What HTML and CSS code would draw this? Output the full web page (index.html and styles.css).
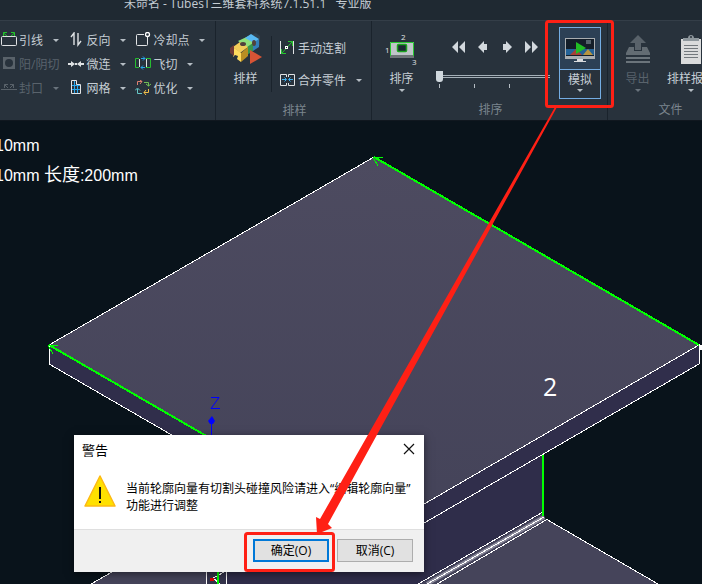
FILE: index.html
```
<!DOCTYPE html>
<html lang="zh-CN">
<head>
    <meta charset="UTF-8">
    <meta name="viewport" content="width=device-width, initial-scale=1.0">
    <title>TubesT三维套料系统</title>
    <link rel="stylesheet" href="styles.css">
</head>
<body>
    <header class="titlebar">未命名 - TubesT三维套料系统7.1.51.1&nbsp;&nbsp; 专业版</header>

    <nav class="ribbon">
        <section class="group group-tools">
            <div class="tool-column">
                <button class="tool caret">
                    <svg width="16" height="16" viewBox="0 0 16 16" fill="none"><rect x=".5" y="4.500" width="15" height="9" rx="1" stroke="#e0e2e4"/><path d="M6 4 2.500 1M2.500 4V.5H6M10 4l3.500-3M10 .5h3.500V4" stroke="#22c52a"/></svg>
                    引线
                </button>
                <button class="tool" disabled>
                    <svg width="16" height="16" viewBox="0 0 16 16"><rect x="2" y="1" width="12" height="12" fill="#59626a"/><circle cx="8" cy="7" r="4" fill="#28323c"/></svg>
                    阳/阴切
                </button>
                <button class="tool caret" disabled>
                    <svg width="16" height="16" viewBox="0 0 16 16" fill="none" stroke="#59626a"><path d="M0 9.500h16M7 8 3.500 4.500M3.500 8V4.500H7M9 8l3.500-3.500M9 4.500h3.500V8"/></svg>
                    封口
                </button>
            </div>
            <div class="tool-column">
                <button class="tool caret">
                    <svg width="16" height="16" viewBox="0 0 16 16" fill="none" stroke="#dfe2e4" stroke-width="1.4"><path d="M6 13V1L3 5M10 1v12l3-4"/></svg>
                    反向
                </button>
                <button class="tool caret">
                    <svg width="16" height="16" viewBox="0 0 16 16" fill="#dfe2e4"><path d="M0 7h3V5l4 3-4 3V9H0zM16 7h-3V5L9 8l4 3V9h3z"/><path d="M7 7h2v2H7z"/></svg>
                    微连
                </button>
                <button class="tool caret">
                    <svg width="16" height="16" viewBox="0 0 16 16" fill="none"><path d="M3 5.500h9M3 9.500h9M6.500 1v12M9.500 5v8" stroke="#27a7ee"/><path d="M3.500.5h5v4h4v9h-9z" stroke="#e3e5e7"/></svg>
                    网格
                </button>
            </div>
            <div class="tool-column">
                <button class="tool caret">
                    <svg width="16" height="16" viewBox="0 0 16 16" fill="none" stroke="#e3e5e7"><path d="M9 2.500H2.500a1 1 0 0 0-1 1v9a1 1 0 0 0 1 1h9a1 1 0 0 0 1-1V5"/><circle cx="12.500" cy="2.500" r="2" stroke="#fff" stroke-width="1.3"/></svg>
                    冷却点
                </button>
                <button class="tool caret">
                    <svg width="16" height="16" viewBox="0 0 16 16" fill="none"><path d="M4 2.500H.5v9H4M11 2.500h4.500v9H11" stroke="#27bd31"/><path d="M4.500 3v8M11.500 3v8" stroke="#e3e5e7"/><path d="M6 2.500h4M8 .5l2 2-2 2M10 11.500H6M8 9.500l-2 2 2 2" stroke="#27a7ee"/></svg>
                    飞切
                </button>
                <button class="tool caret">
                    <svg width="16" height="16" viewBox="0 0 16 16" fill="none"><path d="M2.500 5V1.500H7M5 0l2 1.500L5 4" stroke="#de8070"/><path d="M9 2.500h4.500V6M11 4l2.500 2L16 4" stroke="#70bd55"/><path d="M13.500 9v3.500H9M11 10l-2 2.500 2 2.500" stroke="#f1bd49"/><path d="M7 13.500H2.500V9M0 10.500 2.500 8 5 10.500" stroke="#65c7c6"/></svg>
                    优化
                </button>
            </div>
        </section>

        <section class="group group-nest">
            <div class="group-body">
                <button class="big">
                    <svg width="34" height="34" viewBox="0 0 34 34">
                        <path d="M22 3l5-2 4 3v9l-6 4z" fill="#31404c"/>
                        <path d="M9 9 22 3l8 5-12 8z" fill="#8ee07b"/>
                        <path d="M16 6l6-4 8 5-5 4z" fill="#58b9f3"/>
                        <path d="M24 11l6-4v8l-6 4z" fill="#337fb8"/>
                        <path d="M18 15l6-4v8l-6 4z" fill="#39964c"/>
                        <path d="M4 15l7-5 8 5-8 6z" fill="#f2cd59"/>
                        <path d="M4 15l8 6v9l-4-3 1-3-3-1-2 2z" fill="#ffdb5e"/>
                        <path d="M12 21l7-6v9l-7 6z" fill="#b98e22"/>
                        <path d="M1 16l4-3v11l-4-3z" fill="#713b35"/>
                        <ellipse cx="14" cy="12" rx="3" ry="2" fill="#51423c"/>
                        <ellipse cx="25" cy="11" rx="2" ry="3" fill="#51423c"/>
                        <path d="M21 18 33 25 21 32z" fill="#d75435"/>
                    </svg>
                    排样
                </button>
                <div class="tool-pair">
                    <button class="tool">
                        <svg width="16" height="16" viewBox="0 0 16 16" fill="none"><path d="M.5 1v13M13.500 1v13" stroke="#dfe2e4"/><path d="M2 13 12 2M8 1.500h4.500V6M1.500 9v4.500H6" stroke="#25c52e"/><rect x="5.500" y="6.500" width="2" height="2" fill="#28323c" stroke="#fff"/></svg>
                        手动连割
                    </button>
                    <button class="tool caret">
                        <svg width="16" height="16" viewBox="0 0 16 16" fill="none"><path d="M6.500 5V2.500h-6v11h6V11M8.500 5V2.500h6v11h-6V11" stroke="#dfe2e4"/><path d="M2 7.500h4M4.500 5.500l2 2-2 2M13 7.500H9M10.500 5.500l-2 2 2 2" stroke="#40b4f4"/></svg>
                        合并零件
                    </button>
                </div>
            </div>
            <h2 class="group-name">排样</h2>
        </section>

        <section class="group group-order">
            <div class="group-body">
                <button class="big caret">
                    <svg width="34" height="34" viewBox="0 0 34 34">
                        <rect x="5" y="10" width="24" height="13" fill="#bfc5c9"/>
                        <path d="M5 23h24v3H5z" fill="#6d7478"/>
                        <path d="M5.500 24V10.500h23V24" fill="none" stroke="#27c931"/>
                        <rect x="12.500" y="12.500" width="9" height="7" rx="1" fill="#1c2a35" stroke="#1aa51f" stroke-width="1.5"/>
                        <g class="order-digits"><text x="0" y="21">1</text><text x="16" y="8">2</text><text x="27" y="33">3</text></g>
                    </svg>
                    排序
                </button>
                <div class="player">
                    <div class="player-buttons">
                        <button aria-label="第一个"><svg width="14" height="14" viewBox="0 0 14 14"><path d="M6 1v12L0 7zM13 1v12L7 7z"/></svg></button>
                        <button aria-label="上一个"><svg width="14" height="14" viewBox="0 0 14 14"><path d="M2 7l6-6v3h3v6H8v3z"/></svg></button>
                        <button aria-label="下一个"><svg width="14" height="14" viewBox="0 0 14 14"><path d="M12 7 6 1v3H3v6h3v3z"/></svg></button>
                        <button aria-label="最后一个"><svg width="14" height="14" viewBox="0 0 14 14"><path d="M1 1v12l6-6zM8 1v12l6-6z"/></svg></button>
                    </div>
                    <input class="slider" type="range" min="0" max="100" value="0" aria-label="排序进度">
                    <div class="ticks"><i></i><i></i><i></i></div>
                </div>
                <button class="simulate">
                    <span class="simulate-icon">
                        <svg width="32" height="28" viewBox="0 0 32 28">
                            <rect x="1" y="2" width="30" height="21" fill="#a9adb0"/>
                            <rect x="2" y="3" width="28" height="17" fill="#141e29"/>
                            <path d="M2 13h28v6H2z" fill="#246398"/>
                            <path d="M6 19l6-6 6 6z" fill="#a84034"/><path d="M19 19l5-6 5 6z" fill="#b89540"/>
                            <path d="M22 4h5v4h-5z" fill="#55626c"/>
                            <path d="M12 6l10 6-10 6z" fill="#21bd25"/>
                            <path d="M13 23h6v2h3v1H10v-1h3z" fill="#d7dadd"/>
                        </svg>
                    </span>
                    <span class="simulate-text caret">模拟</span>
                </button>
            </div>
            <h2 class="group-name">排序</h2>
        </section>

        <section class="group group-file">
            <div class="group-body">
                <button class="big caret" disabled>
                    <svg width="34" height="34" viewBox="0 0 34 34">
                        <path d="M17 3l8 8h-5v7h-6v-7H9z" fill="#59626a"/>
                        <path d="M8 15h5v4h8v-4h5l3 6v2H5v-2z" fill="#636c73"/>
                        <path d="M5 25h24v2H5zM5 29h24v2H5z" fill="#6b747b"/>
                    </svg>
                    导出
                </button>
                <button class="big big-wide caret">
                    <svg width="34" height="34" viewBox="0 0 34 34">
                        <path d="M7 7h20v25H7z" fill="#dadbdc"/>
                        <path d="M9 9V6h5c0-4 6-4 6 0h5v3z" fill="#8e979d"/>
                        <circle cx="17" cy="5" r="1" fill="#28323c"/>
                        <path d="M10 13.500h14M10 16.500h14M10 19.500h14M10 22.500h14M10 25.500h14" stroke="#72787d"/>
                    </svg>
                    排样报告
                </button>
            </div>
            <h2 class="group-name">文件</h2>
        </section>
    </nav>

    <main class="viewport">
        <svg class="scene" viewBox="0 121 702 463" preserveAspectRatio="xMinYMin slice">
            <defs>
                <linearGradient id="face" x1="0" y1="0" x2="0" y2="1">
                    <stop offset="0" stop-color="#4d4b60"/>
                    <stop offset="1" stop-color="#444359"/>
                </linearGradient>
            </defs>
            <!-- bottom flange and web -->
            <path d="M91 584 206 518H420L546 519 658 584z" fill="#45445a"/>
            <path d="M226 454H543V513L420 584H226z" fill="#2f2d4a"/>
            <path d="M206 560h20v24h-20z" fill="#34334b"/>
            <path d="M543 513 420 584H437L546 520z" fill="#45445b"/>
            <path d="M544 517 427 584" stroke="#8c8b9c" stroke-width="4"/>
            <g fill="none" stroke="#fff" shape-rendering="crispEdges">
                <path d="M91 584l28-16M543 512 418 584M544 517 427 584M546 520 437 584M546 519l112 65"/>
                <path d="M206.500 570v14M226.500 570v14M213 578l13-7M213 578l7 6"/>
            </g>
            <path d="M543 454v62" stroke="#0f0" stroke-width="2"/>
            <path d="M218 570v14" stroke="#0f0" stroke-width="2"/>
            <path d="M210 578h4v3h-4z" fill="#e00000"/>
            <!-- top flange -->
            <g transform="translate(-1 -1)">
                <path d="M50 346 375 534 700 346V365L375 553 50 365z" fill="#302e4b"/>
                <path d="M375 158 700 346 375 534 50 346z" fill="url(#face)"/>
                <path d="M375 158 50 346V365L375 553 700 365V346L375 534" fill="none" stroke="#fff" shape-rendering="crispEdges"/>
                <g fill="none" stroke="#0f0" shape-rendering="crispEdges">
                    <path d="M375 158 700 346M50 346 375 534" stroke-width="2"/>
                    <path d="M384 158h-10l5 9M59 346H49l5 9"/>
                </g>
            </g>
            <path d="M699 345h5v5h-5z" fill="#fff"/>
            <path d="M211.500 418v30" stroke="#00f"/>
            <path d="M212 416l3 5-2 3h-3l-2-3z" fill="#00f"/>
            <path d="M211 397.500h8l-8 11h9" fill="none" stroke="#00f"/>
        </svg>
        <p class="label label-size">10mm</p>
        <p class="label label-length">10mm <span class="label-cjk">长度</span>:200mm</p>
        <p class="label label-part">2</p>
    </main>

    <div class="dialog" role="alertdialog" aria-labelledby="dialogTitle" aria-describedby="dialogText">
        <div class="dialog-head">
            <h1 id="dialogTitle">警告</h1>
            <button class="dialog-close" aria-label="关闭"><svg width="12" height="12" viewBox="0 0 12 12"><path d="M1 1l10 10M11 1 1 11" stroke="#111" stroke-width="1.2"/></svg></button>
        </div>
        <div class="dialog-body">
            <svg width="32" height="32" viewBox="0 0 32 32"><path d="M16 1 31 31H1z" fill="#ffe000" stroke="#fdb913" stroke-width="1.5" stroke-linejoin="round"/><path d="M15 12h2v12h-2zM15 26h2v2h-2z" fill="#111"/></svg>
            <p id="dialogText">当前轮廓向量有切割头碰撞风险请进入“编辑轮廓向量”<br>功能进行调整</p>
        </div>
        <div class="dialog-foot">
            <button class="dialog-button primary">确定(O)</button>
            <button class="dialog-button">取消(C)</button>
        </div>
    </div>

    <svg class="marks" width="702" height="584" viewBox="0 0 702 584">
        <g fill="none" stroke="#ff2015" stroke-width="3">
            <rect x="546.500" y="21.500" width="66" height="85" rx="2"/>
            <rect x="245.500" y="533.500" width="88" height="37" rx="2"/>
        </g>
        <path d="M555 107h2L328 524l4 4-15 6-1-17 4 2z" fill="#ff2015"/>
    </svg>
</body>
</html>
```
FILE: styles.css
```
* {
    box-sizing: border-box;
}
body {
    margin: 0;
    height: 100vh;
    display: flex;
    flex-direction: column;
    overflow: hidden;
    position: relative;
    background-color: #09131b;
    color: #c5cdd4;
    font-family: "Open Sans", "Noto Sans CJK SC", sans-serif;
    font-size: 12px;
}
button {
    font: inherit;
    color: inherit;
    background: none;
    border: 0;
    padding: 0;
    white-space: nowrap;
}
svg {
    flex: none;
    display: block;
}
h1, h2, p {
    margin: 0;
    font-weight: normal;
}
.titlebar {
    height: 20px;
    flex: none;
    padding-left: 124px;
    line-height: 8px;
    background-color: #1f2932;
    white-space: nowrap;
}

/* ribbon */
.ribbon {
    display: flex;
    flex: none;
    height: 101px;
    background-color: #28323c;
    border-top: 1px solid #343e48;
    border-bottom: 1px solid #10171f;
}
.group {
    display: flex;
    flex-direction: column;
    flex: none;
    border-right: 1px solid #1a232c;
}
.group-body {
    display: flex;
    height: 80px;
}
.group-name {
    padding-left: 2px;
    font-size: 12px;
    line-height: 20px;
    text-align: center;
    color: #7b858e;
}
.group-tools {
    width: 216px;
    flex-direction: row;
    gap: 8px;
    padding-top: 7px;
}
.group-nest {
    width: 156px;
}
.group-order {
    width: 236px;
}
.group-file {
    flex: 1 0 124px;
}
.tool-column {
    display: flex;
    flex-direction: column;
    align-items: flex-start;
}
.tool {
    display: flex;
    align-items: center;
    gap: 2px;
    height: 24px;
}
.tool-column .tool {
    padding-left: 1px;
}
.caret::after {
    content: "";
    border: 3px solid transparent;
    border-top-color: #b5bdc4;
    border-bottom: 0;
}
.tool.caret::after {
    margin-left: 8px;
}
button:disabled {
    color: #59636c;
}
button:disabled::after {
    border-top-color: #69737c;
}
.big {
    display: flex;
    flex-direction: column;
    align-items: center;
    width: 55px;
    padding: 11px 0 0 4px;
    line-height: 26px;
}
.big-wide {
    width: 56px;
    padding-left: 0;
}
.big::after {
    margin-top: -3px;
}
.group-nest .big::after {
    content: none;
}
.tool-pair {
    display: flex;
    flex-direction: column;
    gap: 8px;
    margin: 15px 0 9px;
    padding-left: 8px;
    border-left: 1px solid #1a232c;
}
.order-digits {
    font-size: 8px;
    fill: #e0e4e7;
}
.player {
    width: 114px;
    margin-left: 9px;
    padding-top: 19px;
}
.player-buttons {
    display: flex;
    gap: 10px;
    padding-left: 16px;
    fill: #d2d8dd;
}
.slider {
    display: block;
    appearance: none;
    width: 114px;
    height: 12px;
    margin: 16px 0 0;
    background: none;
}
.slider::-webkit-slider-runnable-track {
    height: 3px;
    border: solid #a5b0b8;
    border-width: 1px 0;
}
.slider::-webkit-slider-thumb {
    appearance: none;
    width: 7px;
    height: 11px;
    margin-top: -5px;
    border-radius: 0 0 3px 3px;
    background-color: #d0d8de;
}
.ticks {
    display: flex;
    gap: 34px;
    padding: 2px 0 0 3px;
}
.ticks i {
    width: 1px;
    height: 4px;
    background-color: #b5bdc4;
}
.simulate {
    width: 42px;
    height: 72px;
    margin: 6px 0 0 9px;
    border: 1px solid #74ade3;
}
.simulate-icon {
    display: flex;
    justify-content: center;
    height: 42px;
    padding-top: 8px;
    background-color: #2c4055;
    border-bottom: 1px solid #74ade3;
}
.simulate-text {
    display: flex;
    flex-direction: column;
    align-items: center;
    height: 28px;
    line-height: 19px;
}

/* 3D view */
.viewport {
    flex: 1;
    position: relative;
    overflow: hidden;
}
.scene {
    width: 100%;
    height: 100%;
}
.label {
    position: absolute;
    font-family: "Liberation Sans", "Noto Sans CJK SC", sans-serif;
    font-size: 16px;
    line-height: 20px;
    color: #fff;
    white-space: nowrap;
}
.label-size {
    left: -5px;
    top: 15px;
}
.label-length {
    left: -5px;
    top: 44px;
}
.label-cjk {
    font-size: 18px;
}
.label-part {
    left: 543px;
    top: 255px;
    font-family: "Open Sans", sans-serif;
    font-size: 25px;
}

/* warning dialog */
.dialog {
    position: absolute;
    left: 74px;
    top: 435px;
    width: 350px;
    background-color: #fff;
    color: #000;
    box-shadow: 0 2px 8px rgba(0, 0, 0, 0.5);
}
.dialog-head {
    display: flex;
    justify-content: space-between;
    align-items: center;
    height: 28px;
    padding: 0 9px 0 8px;
}
.dialog-head h1 {
    font-size: 13px;
}
.dialog-body {
    display: flex;
    gap: 10px;
    height: 66px;
    padding: 12px 10px;
}
.dialog-body p {
    padding-top: 5px;
    line-height: 17px;
    white-space: nowrap;
}
.dialog-foot {
    display: flex;
    justify-content: flex-end;
    gap: 8px;
    padding: 9px 11px 10px;
    border-top: 1px solid #dfdfdf;
    background-color: #f0f0f0;
}
.dialog-button {
    width: 76px;
    height: 23px;
    padding-bottom: 2px;
    border: 1px solid #adadad;
    background-color: #e1e1e1;
}
.dialog-button.primary {
    border: 2px solid #0078d7;
}

/* red callouts */
.marks {
    position: absolute;
    left: 0;
    top: 0;
    pointer-events: none;
}
```
